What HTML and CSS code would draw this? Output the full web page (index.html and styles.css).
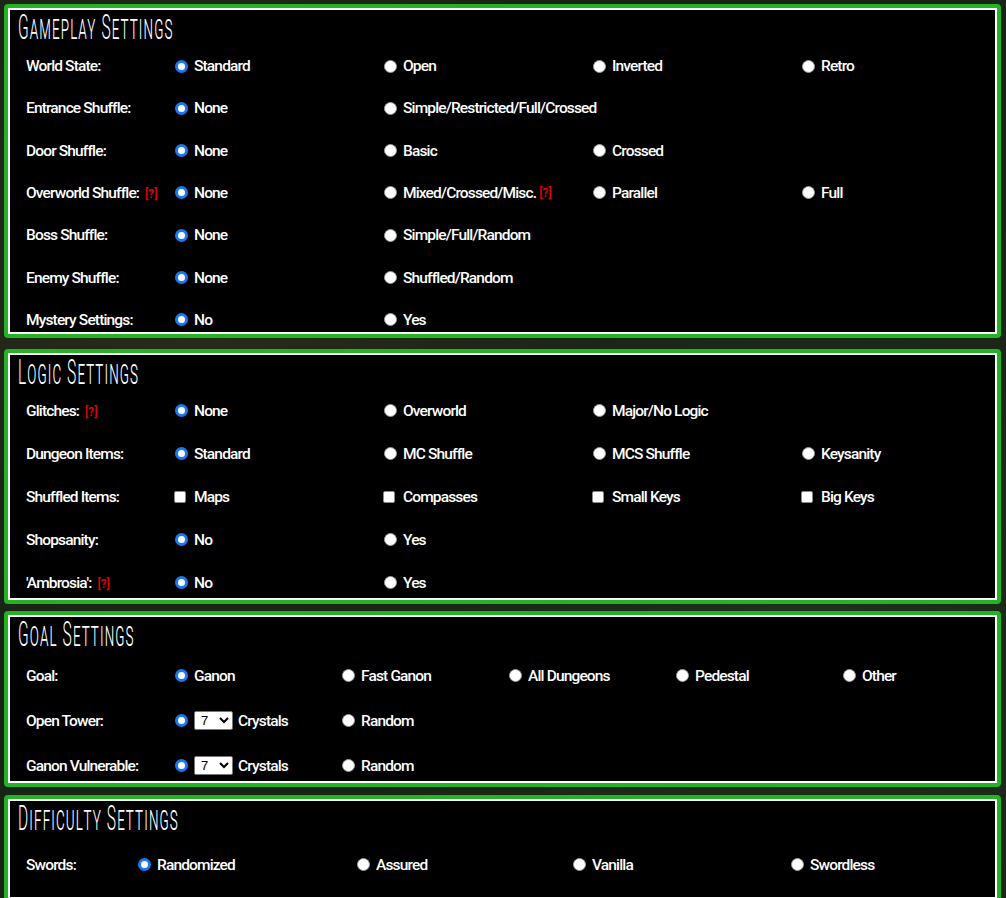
FILE: index.html
```html
<!DOCTYPE html>
<html lang="en">
<head>
<meta charset="utf-8">
<title>Settings</title>
<link rel="stylesheet" href="styles.css">
</head>
<body>
<div class="page">

  <section class="panel panel-gameplay">
    <h2 class="panel-title"><span>Gameplay Settings</span></h2>
    <div class="rows">
      <div class="row">
        <div class="label">World State:</div>
        <div class="opt"><span class="radio on"></span>Standard</div>
        <div class="opt"><span class="radio"></span>Open</div>
        <div class="opt"><span class="radio"></span>Inverted</div>
        <div class="opt"><span class="radio"></span>Retro</div>
      </div>
      <div class="row">
        <div class="label">Entrance Shuffle:</div>
        <div class="opt"><span class="radio on"></span>None</div>
        <div class="opt wide"><span class="radio"></span>Simple/Restricted/Full/Crossed</div>
      </div>
      <div class="row">
        <div class="label">Door Shuffle:</div>
        <div class="opt"><span class="radio on"></span>None</div>
        <div class="opt"><span class="radio"></span>Basic</div>
        <div class="opt"><span class="radio"></span>Crossed</div>
      </div>
      <div class="row">
        <div class="label">Overworld Shuffle: <span class="help">[?]</span></div>
        <div class="opt"><span class="radio on"></span>None</div>
        <div class="opt"><span class="radio"></span>Mixed/Crossed/Misc. <span class="help">[?]</span></div>
        <div class="opt"><span class="radio"></span>Parallel</div>
        <div class="opt"><span class="radio"></span>Full</div>
      </div>
      <div class="row">
        <div class="label">Boss Shuffle:</div>
        <div class="opt"><span class="radio on"></span>None</div>
        <div class="opt"><span class="radio"></span>Simple/Full/Random</div>
      </div>
      <div class="row">
        <div class="label">Enemy Shuffle:</div>
        <div class="opt"><span class="radio on"></span>None</div>
        <div class="opt"><span class="radio"></span>Shuffled/Random</div>
      </div>
      <div class="row">
        <div class="label">Mystery Settings:</div>
        <div class="opt"><span class="radio on"></span>No</div>
        <div class="opt"><span class="radio"></span>Yes</div>
      </div>
    </div>
  </section>

  <section class="panel panel-logic">
    <h2 class="panel-title"><span>Logic Settings</span></h2>
    <div class="rows">
      <div class="row">
        <div class="label">Glitches: <span class="help">[?]</span></div>
        <div class="opt"><span class="radio on"></span>None</div>
        <div class="opt"><span class="radio"></span>Overworld</div>
        <div class="opt"><span class="radio"></span>Major/No Logic</div>
      </div>
      <div class="row">
        <div class="label">Dungeon Items:</div>
        <div class="opt"><span class="radio on"></span>Standard</div>
        <div class="opt"><span class="radio"></span>MC Shuffle</div>
        <div class="opt"><span class="radio"></span>MCS Shuffle</div>
        <div class="opt"><span class="radio"></span>Keysanity</div>
      </div>
      <div class="row">
        <div class="label">Shuffled Items:</div>
        <div class="opt"><span class="check"></span>Maps</div>
        <div class="opt"><span class="check"></span>Compasses</div>
        <div class="opt"><span class="check"></span>Small Keys</div>
        <div class="opt"><span class="check"></span>Big Keys</div>
      </div>
      <div class="row">
        <div class="label">Shopsanity:</div>
        <div class="opt"><span class="radio on"></span>No</div>
        <div class="opt"><span class="radio"></span>Yes</div>
      </div>
      <div class="row">
        <div class="label">'Ambrosia': <span class="help">[?]</span></div>
        <div class="opt"><span class="radio on"></span>No</div>
        <div class="opt"><span class="radio"></span>Yes</div>
      </div>
    </div>
  </section>

  <section class="panel panel-goal">
    <h2 class="panel-title"><span>Goal Settings</span></h2>
    <div class="rows">
      <div class="row">
        <div class="label">Goal:</div>
        <div class="opt"><span class="radio on"></span>Ganon</div>
        <div class="opt"><span class="radio"></span>Fast Ganon</div>
        <div class="opt"><span class="radio"></span>All Dungeons</div>
        <div class="opt"><span class="radio"></span>Pedestal</div>
        <div class="opt"><span class="radio"></span>Other</div>
      </div>
      <div class="row">
        <div class="label">Open Tower:</div>
        <div class="opt"><span class="radio on"></span><select class="pick"><option>7</option></select>Crystals</div>
        <div class="opt"><span class="radio"></span>Random</div>
      </div>
      <div class="row">
        <div class="label">Ganon Vulnerable:</div>
        <div class="opt"><span class="radio on"></span><select class="pick"><option>7</option></select>Crystals</div>
        <div class="opt"><span class="radio"></span>Random</div>
      </div>
    </div>
  </section>

  <section class="panel panel-difficulty">
    <h2 class="panel-title"><span>Difficulty Settings</span></h2>
    <div class="rows">
      <div class="row">
        <div class="label">Swords:</div>
        <div class="opt"><span class="radio on"></span>Randomized</div>
        <div class="opt"><span class="radio"></span>Assured</div>
        <div class="opt"><span class="radio"></span>Vanilla</div>
        <div class="opt"><span class="radio"></span>Swordless</div>
      </div>
    </div>
  </section>

</div>
</body>
</html>
```

FILE: styles.css
```css
* {
  box-sizing: border-box;
}

html, body {
  margin: 0;
  height: 100%;
}

body {
  background: #1a2317;
  background-image:
    radial-gradient(circle at 20% 30%, rgba(70, 60, 35, 0.35), transparent 40%),
    radial-gradient(circle at 80% 70%, rgba(40, 70, 40, 0.35), transparent 45%);
  font-family: Roboto, "Liberation Sans", sans-serif;
  color: #fff;
  overflow: hidden;
}

.page {
  display: flex;
  flex-direction: column;
  padding: 4px 5px 0 4px;
}

.panel {
  background: #000;
  border: 4px solid #22b422;
  border-radius: 4px;
  box-shadow: inset 0 0 0 2px #fff;
  padding: 0 0 var(--pb) 18px;
  overflow: hidden;
}

.panel-gameplay {
  --th: 44px;
  --gap: 14.33px;
  --pb: 0px;
  --cols: 144px repeat(4, 209px);
  margin-bottom: 11px;
}

.panel-logic {
  --th: 44px;
  --gap: 15px;
  --pb: 3px;
  --cols: 144px repeat(4, 209px);
  margin-bottom: 7px;
}

.panel-goal {
  --th: 47px;
  --gap: 17px;
  --pb: 3px;
  --cols: 144px repeat(5, 167px);
  margin-bottom: 8px;
}

.panel-difficulty {
  --th: 52px;
  --gap: 0px;
  --pb: 20px;
  --cols: 107px 219px 216px 218px 218px;
}

.panel-title {
  margin: 0 0 0 -8px;
  height: var(--th);
  padding-top: 2px;
  font-family: Roboto, "DejaVu Sans", sans-serif;
  font-weight: 300;
  font-size: 35px;
  line-height: 35px;
  font-variant: small-caps;
  letter-spacing: 2.5px;
  white-space: nowrap;
  color: #fff;
}

.panel-title span {
  display: inline-block;
  transform: scaleX(0.445);
  transform-origin: 0 0;
}

.rows {
  display: flex;
  flex-direction: column;
  gap: var(--gap);
}

.row {
  display: grid;
  grid-template-columns: var(--cols);
  height: 28px;
  align-items: center;
  font-size: 15.5px;
  font-weight: 500;
  letter-spacing: -0.85px;
  white-space: nowrap;
}

.label {
  color: #fff;
}

.opt {
  display: flex;
  align-items: center;
}

.opt.wide {
  grid-column: span 2;
}

.radio {
  flex: none;
  width: 13px;
  height: 13px;
  margin: 0 6px 0 5px;
  border-radius: 50%;
  background: #fff;
  border: 1px solid #9a9a9a;
}

.radio.on {
  border: 3.5px solid #1a78f2;
}

.check {
  flex: none;
  width: 12px;
  height: 12px;
  margin: 0 8px 0 4px;
  border-radius: 2px;
  background: #fff;
  border: 1px solid #8a8a8a;
}

.help {
  color: #ee0000;
  font-size: 12px;
  font-weight: 500;
  letter-spacing: 0;
  margin-left: 3px;
}

.pick {
  width: 39px;
  height: 19px;
  margin: 0 5px 0 0;
  padding: 0 0 0 2px;
  font-family: "Liberation Sans", Arial, sans-serif;
  font-size: 13px;
  font-weight: 400;
  letter-spacing: 0;
  background: #fff;
  color: #000;
  border: 1px solid #767676;
  border-radius: 2px;
}
```
